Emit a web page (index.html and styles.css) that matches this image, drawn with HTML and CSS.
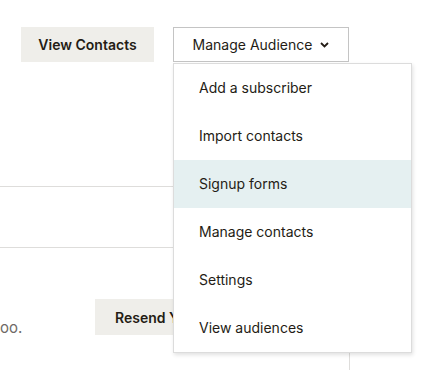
FILE: index.html
```html
<!DOCTYPE html>
<html lang="en">
<head>
    <meta charset="UTF-8">
    <title>Audience</title>
    <link rel="stylesheet" href="styles.css">
</head>
<body>
    <div class="toolbar">
        <button class="btn btn-secondary">View Contacts</button>
        <div class="dropdown">
            <button class="btn btn-outline">Manage Audience
                <svg class="chevron" width="9" height="6" viewBox="0 0 9 6"><path d="M1 1l3.5 3.5L8 1" fill="none" stroke="#241c15" stroke-width="1.8"/></svg>
            </button>
            <ul class="menu">
                <li>Add a subscriber</li>
                <li>Import contacts</li>
                <li class="hover">Signup forms</li>
                <li>Manage contacts</li>
                <li>Settings</li>
                <li>View audiences</li>
            </ul>
        </div>
    </div>

    <div class="list">
        <div class="list-row"></div>
        <div class="list-row last">
            <div class="cell-main">
                <p class="note">oo.</p>
                <button class="btn btn-secondary btn-resend">Resend Your Invite</button>
            </div>
            <div class="cell-side"></div>
        </div>
    </div>
</body>
</html>
```

FILE: styles.css
```css
body {
    margin: 0;
    background: #fff;
    font-family: Inter, "Noto Sans", sans-serif;
    color: #241c15;
    overflow: hidden;
}

.toolbar {
    display: flex;
    gap: 19px;
    padding: 27px 0 0 21px;
}

.btn {
    height: 35px;
    font-family: inherit;
    font-size: 14px;
    color: #241c15;
    border: 0;
    border-radius: 0;
    cursor: pointer;
}

.btn-secondary {
    width: 133px;
    background: #efeeea;
    font-weight: 600;
}

.btn-outline {
    width: 176px;
    background: #fff;
    border: 1px solid #c4c4c4;
    font-weight: 400;
    display: flex;
    align-items: center;
    justify-content: center;
    gap: 8px;
    padding: 0 0 1px 0;
}

.chevron {
    margin-top: 1px;
}

.dropdown {
    position: relative;
}

/* menu sits over the page content */
.menu {
    position: absolute;
    top: 36px;
    left: 0;
    width: 237px;
    margin: 0;
    padding: 0;
    list-style: none;
    background: #fff;
    border: 1px solid #dcdcdc;
    box-shadow: 1px 2px 4px rgba(0, 0, 0, 0.12);
    z-index: 2;
}

.menu li {
    height: 48px;
    line-height: 48px;
    padding-left: 25px;
    font-size: 14px;
}

.menu li.hover {
    background: #e5f0f1;
}

.list {
    margin-top: 124px;
    width: 390px;
}

.list-row {
    height: 60px;
    border-top: 1px solid #dedddb;
}

.list-row.last {
    height: auto;
    display: flex;
    align-items: flex-start;
}

.cell-main {
    width: 349px;
    display: flex;
    align-items: flex-end;
    padding-top: 51px;
}

.note {
    margin: 0 0 -2px 0;
    font-size: 15px;
    color: #6f6a66;
    width: 95px;
}

.btn-resend {
    width: 200px;
    height: 36px;
    text-align: left;
    padding-left: 20px;
    white-space: nowrap;
}

.cell-side {
    border-left: 1px solid #dedddb;
    height: 130px;
}
```
